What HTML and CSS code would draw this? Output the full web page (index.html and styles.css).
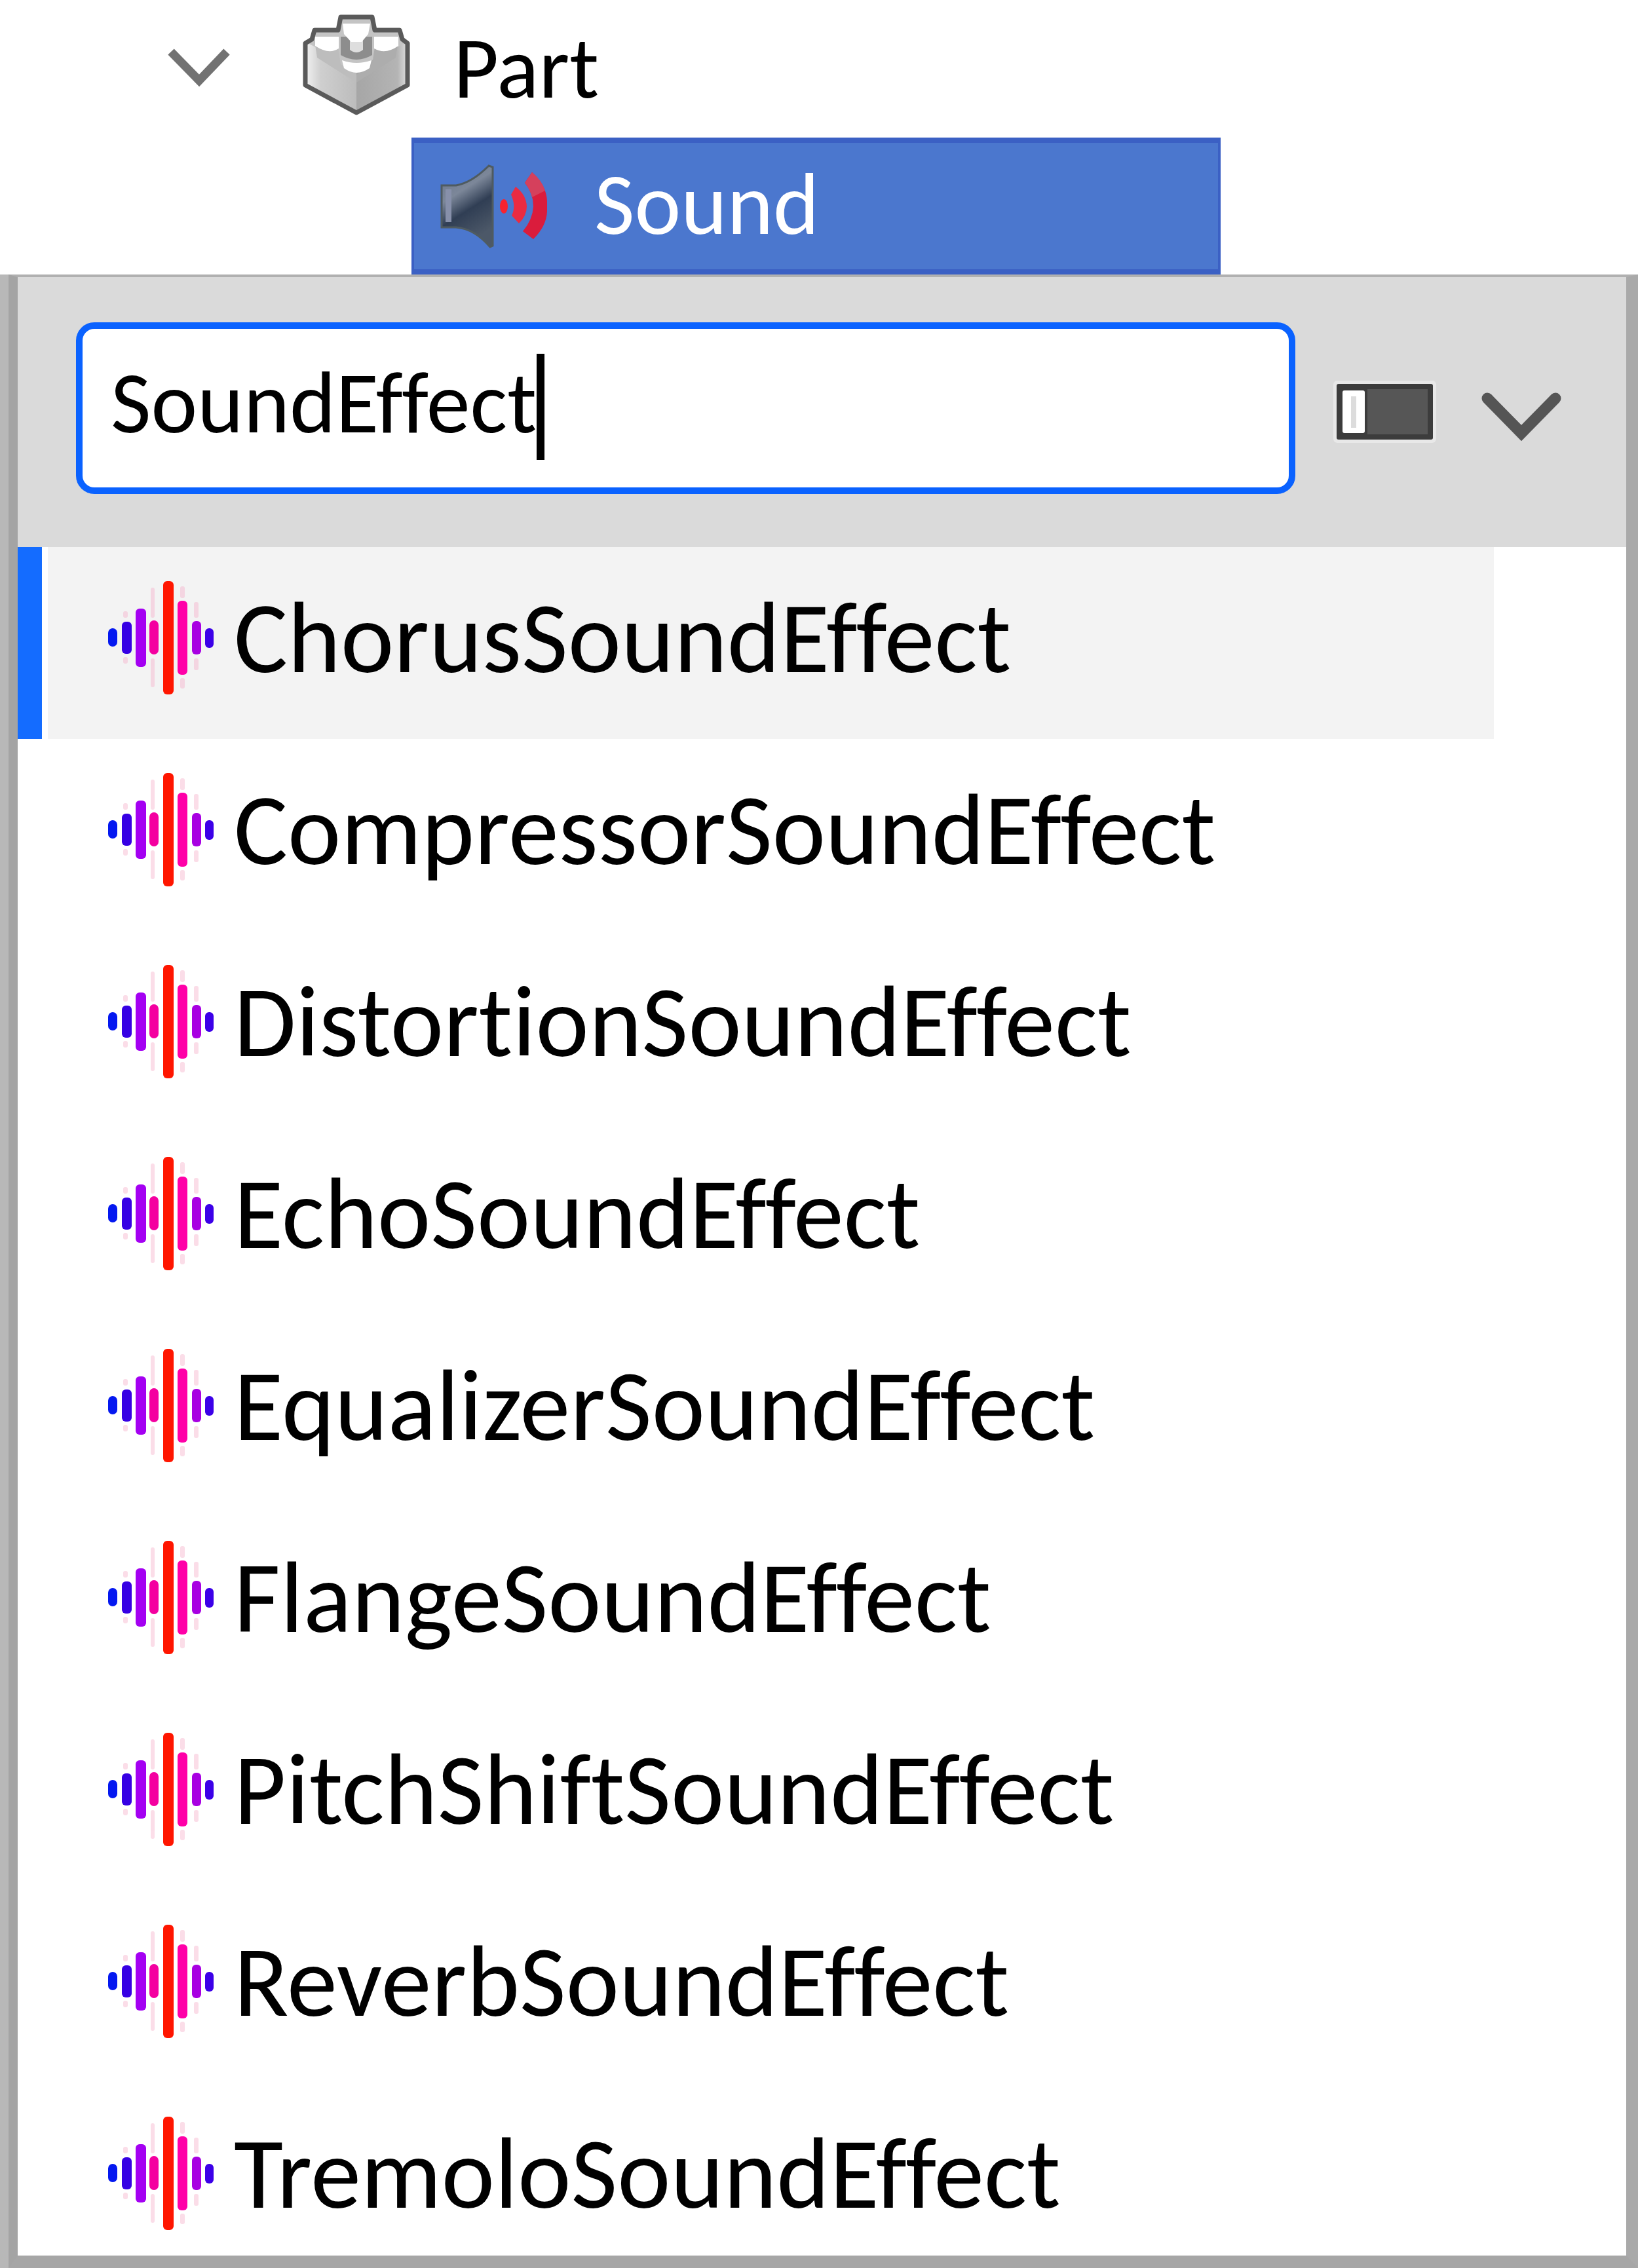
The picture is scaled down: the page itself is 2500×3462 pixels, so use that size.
FILE: index.html
```html
<!DOCTYPE html>
<html lang="en">
<head>
<meta charset="utf-8">
<title>Insert Object</title>
<link rel="stylesheet" href="styles.css">
</head>
<body>
<svg class="sprite" aria-hidden="true">
  <symbol id="wave" viewBox="0 0 180 180">
    <g fill="#f6a0c0" opacity=".35">
      <rect x="80" y="14" width="6" height="46" rx="3"/>
      <rect x="80" y="122" width="6" height="44" rx="3"/>
      <rect x="125" y="12" width="7" height="18" rx="3"/>
      <rect x="125" y="152" width="7" height="16" rx="3"/>
      <rect x="146" y="36" width="7" height="24" rx="3"/>
      <rect x="146" y="122" width="7" height="18" rx="3"/>
      <rect x="38" y="50" width="7" height="10" rx="3"/>
      <rect x="38" y="120" width="7" height="10" rx="3"/>
    </g>
    <rect x="15" y="76" width="14" height="28" rx="7" fill="#0418f0"/>
    <rect x="36" y="66" width="15" height="49" rx="6" fill="#3600e4"/>
    <rect x="57" y="46" width="16" height="89" rx="6" fill="#a400f2"/>
    <rect x="78" y="64" width="14" height="52" rx="7" fill="#f400a0"/>
    <rect x="99" y="4" width="16" height="173" rx="6" fill="#ff1600"/>
    <rect x="121" y="34" width="15" height="113" rx="6" fill="#ff00a8"/>
    <rect x="143" y="65" width="14" height="51" rx="6" fill="#a800e2"/>
    <rect x="163" y="76" width="13" height="30" rx="6" fill="#3c00e8"/>
  </symbol>
</svg>
<main class="page">
  <div class="tree" role="tree">
    <div class="node" role="treeitem" aria-expanded="true">
      <button class="icon-button" aria-label="Collapse Part">
        <svg class="node-chevron" viewBox="0 0 100 60"><path d="M7 6 L50 50 L92 6" fill="none" stroke="#727272" stroke-width="13"/></svg>
      </button>
      <svg class="brick" viewBox="0 0 164 156" aria-hidden="true">
        <defs>
          <linearGradient id="left" x1="0" x2="1"><stop offset="0" stop-color="#f2f2f2"/><stop offset=".3" stop-color="#cfcfcf"/><stop offset="1" stop-color="#bcbcbc"/></linearGradient>
          <linearGradient id="right" x1="0" x2="1"><stop offset="0" stop-color="#a6a6a6"/><stop offset=".8" stop-color="#b4b4b4"/><stop offset="1" stop-color="#dedede"/></linearGradient>
        </defs>
        <path d="M4 44 L14 38 L18 24 L54 24 L58 4 L106 4 L110 24 L148 24 L152 38 L160 44 L160 108 L82 150 L4 108 Z" fill="#c4c4c4"/>
        <path d="M4 42 L82 82 L82 150 L4 108 Z" fill="url(#left)"/>
        <path d="M82 82 L160 42 L160 108 L82 150 Z" fill="url(#right)"/>
        <path d="M18 40 L54 50 L58 76 L82 92 L82 104 L22 66 Z" fill="#bdbdbd"/>
        <path d="M146 40 L110 50 L106 76 L82 92 L82 104 L142 66 Z" fill="#adadad"/>
        <path d="M58 34 L58 62 Q82 76 106 62 L106 34 Z" fill="#8d8d8d"/>
        <path d="M72 36 H92 V54 Q82 62 72 54 Z" fill="#dedede"/>
        <path d="M61 14 H103 L100 30 L90 42 H74 L63 30 Z" fill="#fff"/>
        <path d="M19 34 H55 V52 Q40 62 19 48 Z" fill="#fff"/>
        <path d="M109 34 H146 V48 Q126 62 109 52 Z" fill="#fff"/>
        <path d="M60 70 Q82 78 105 70 L102 82 Q82 96 63 82 Z" fill="#fff"/>
        <path d="M4 44 L14 38 L18 24 L54 24 L58 4 L106 4 L110 24 L148 24 L152 38 L160 44 L160 108 L82 150 L4 108 Z" fill="none" stroke="#5a5a5a" stroke-width="7" stroke-linejoin="round"/>
      </svg>
      <span>Part</span>
    </div>
    <div class="node node-selected" role="treeitem" aria-selected="true">
      <svg class="speaker" viewBox="0 0 168 128" aria-hidden="true">
        <defs>
          <linearGradient id="cone" x1="0" y1="0" x2=".4" y2="1"><stop offset="0" stop-color="#67738a"/><stop offset=".4" stop-color="#7c8799"/><stop offset=".65" stop-color="#303e54"/><stop offset="1" stop-color="#4c5868"/></linearGradient>
        </defs>
        <path d="M2 32 H24 Q48 28 74 2 L80 4 V124 L76 126 Q52 98 24 96 H2 Z" fill="url(#cone)" stroke="#4f5b60" stroke-width="3"/>
        <path d="M8 38 H17 V88 H8 Z" fill="#8790aa"/>
        <ellipse cx="97" cy="64" rx="6" ry="11" fill="#f9232f"/>
        <path d="M115 34 Q131 46 132 64 Q132 78 120 90 L109 78 Q116 64 108 46 Z" fill="#ea2b42"/>
        <path d="M140 12 Q162 32 163 56 V72 Q162 94 142 114 L126 102 Q141 84 142 64 Q142 44 129 28 Z" fill="#da1c3c"/>
        <path d="M140 12 Q155 24 160 40 L140 50 Q137 38 129 28 Z" fill="#d5405c"/>
      </svg>
      <span>Sound</span>
    </div>
  </div>

  <div class="popup-edge">
    <section class="popup">
      <div class="search">
        <label class="field">
          <input class="field-input" type="text" value="SoundEffect" size="11" aria-label="Search objects" spellcheck="false">
          <span class="caret"></span>
        </label>
        <button class="icon-button" aria-label="Toggle layout">
          <svg class="layout-icon" viewBox="0 0 165 103"><rect x="4" y="4" width="157" height="95" rx="6" fill="#e8e8e8"/><rect x="9" y="9" width="147" height="85" rx="3" fill="#3c3c3c"/><rect x="56" y="17" width="92" height="69" fill="#565656"/><rect x="18" y="19" width="34" height="65" rx="3" fill="#fff"/><path d="M35 28 V76" stroke="#dcdcdc" stroke-width="8"/></svg>
        </button>
        <button class="icon-button" aria-label="More options">
          <svg class="menu-chevron" viewBox="0 0 126 78"><path d="M11 11 L63 64 L115 11" fill="none" stroke="#555" stroke-width="17" stroke-linecap="round"/></svg>
        </button>
      </div>
      <ul class="results">
        <li class="result result-active"><button class="option"><svg class="wave"><use href="#wave"/></svg>ChorusSoundEffect</button></li>
        <li class="result"><button class="option"><svg class="wave"><use href="#wave"/></svg>CompressorSoundEffect</button></li>
        <li class="result"><button class="option"><svg class="wave"><use href="#wave"/></svg>DistortionSoundEffect</button></li>
        <li class="result"><button class="option"><svg class="wave"><use href="#wave"/></svg>EchoSoundEffect</button></li>
        <li class="result"><button class="option"><svg class="wave"><use href="#wave"/></svg>EqualizerSoundEffect</button></li>
        <li class="result"><button class="option"><svg class="wave"><use href="#wave"/></svg>FlangeSoundEffect</button></li>
        <li class="result"><button class="option"><svg class="wave"><use href="#wave"/></svg>PitchShiftSoundEffect</button></li>
        <li class="result"><button class="option"><svg class="wave"><use href="#wave"/></svg>ReverbSoundEffect</button></li>
        <li class="result"><button class="option"><svg class="wave"><use href="#wave"/></svg>TremoloSoundEffect</button></li>
      </ul>
    </section>
  </div>
</main>
</body>
</html>
```
FILE: styles.css
```css
* {
  box-sizing: border-box;
}

body {
  margin: 0;
  background: #fff;
  color: #000;
  font-family: Carlito, Lato, sans-serif;
  font-size: 134px;
  font-variant-ligatures: none;
}

button,
input {
  margin: 0;
  padding: 0;
  border: 0;
  background: none;
  color: inherit;
  font: inherit;
  font-variant-ligatures: none;
}

svg {
  display: block;
  flex: none;
}

.sprite {
  position: absolute;
  width: 0;
  height: 0;
}

.page {
  display: flex;
  flex-direction: column;
  min-height: 100vh;
}

.node {
  display: flex;
  align-items: center;
  height: 210px;
  padding: 0 0 4px 254px;
  line-height: 160px;
}

.node-chevron {
  width: 100px;
  height: 60px;
}

.brick {
  width: 164px;
  height: 156px;
  margin: 0 66px 6px 108px;
}

.node-selected {
  width: 1235px;
  max-width: 66%;
  height: 209px;
  margin-left: 628px;
  padding: 0 0 8px 40px;
  border: 8px solid #3b60c4;
  border-width: 8px 4px;
  background: #4b77ce;
  color: #fff;
}

.speaker {
  width: 168px;
  height: 128px;
  margin: 8px 67px 0 0;
}

.popup-edge {
  display: flex;
  flex: 1;
  padding-left: 13px;
  background: #b8b8b8;
}

.popup {
  flex: 1;
  border-style: solid;
  border-width: 4px 18px 19px 14px;
  border-color: #b0b0b0 #a9a9a9 #a6a6a6 #a4a4a4;
  background: #fff;
}

.search {
  display: flex;
  align-items: center;
  padding: 69px 97px 81px 89px;
  background: #dadada;
}

.field {
  display: flex;
  flex: 1;
  align-items: center;
  height: 262px;
  margin-right: 54px;
  padding: 0 0 18px 43px;
  border: 10px solid #0a62ff;
  border-radius: 28px;
  background: #fff;
}

.field-input {
  field-sizing: content;
  height: 160px;
  outline: 0;
}

.caret {
  width: 12px;
  height: 162px;
  margin-top: 14px;
  background: #000;
}

.layout-icon {
  width: 165px;
  height: 103px;
  margin: 10px 63px 0 0;
}

.menu-chevron {
  width: 126px;
  height: 78px;
  margin-top: 26px;
}

.results {
  margin: 0;
  padding: 0;
  list-style: none;
}

.result {
  display: flex;
  border-left: 37px solid #fff;
}

.result-active {
  border-color: #146cff;
}

.result-active .option {
  background: #f3f3f3;
}

.option {
  display: flex;
  flex: 1;
  align-items: center;
  gap: 27px;
  margin: 0 202px 0 9px;
  padding: 48px 0 65px 77px;
  font-size: 154px;
  line-height: 180px;
  text-align: left;
}

.result:last-child .option {
  padding-bottom: 36px;
}

.wave {
  width: 180px;
  height: 180px;
}
```
